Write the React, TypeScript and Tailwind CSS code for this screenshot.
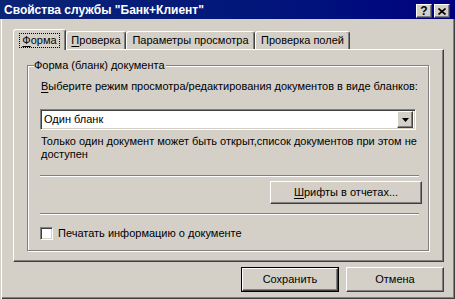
import React from "react";

// Win2000-style "Свойства службы" dialog
const face = "bg-[#d4d0c8]";
const raised =
  "border border-t-white border-l-white border-r-[#404040] border-b-[#404040] shadow-[inset_-1px_-1px_0_#808080]";
const sunken =
  "border border-t-[#808080] border-l-[#808080] border-r-white border-b-white shadow-[inset_1px_1px_0_#404040,inset_-1px_-1px_0_#d4d0c8]";

function Tab({ label, acc, selected, width }: { label: string; acc?: string; selected?: boolean; width: string }) {
  return (
    <div
      className={`${width} ${face} flex items-center justify-center rounded-t-[3px] border-l border-t border-r border-l-white border-t-white border-r-[#404040] shadow-[inset_-1px_0_0_#808080] ${
        selected ? "relative z-10 -mb-px h-[21px]" : "h-[18px]"
      }`}
    >
      <span className={selected ? "outline outline-1 outline-dotted outline-black px-[2px] leading-[13px]" : "leading-[13px]"}>
        {acc && <u className="underline-offset-[2px]">{acc}</u>}
        {label}
      </span>
    </div>
  );
}

function Separator() {
  return <div className="h-[2px] w-[379px] border-t border-t-[#808080] border-b border-b-white" />;
}

export default function App() {
  return (
    <div
      className={`w-[455px] h-[299px] ${face} text-[11px] text-black font-['Liberation_Sans',Arial,sans-serif] shadow-[inset_1px_0_0_#d4d0c8,inset_2px_0_0_#fff,inset_-1px_-1px_0_#404040,inset_-2px_-2px_0_#808080] flex flex-col overflow-hidden`}
    >
      {/* title bar */}
      <div className="h-[19px] shrink-0 bg-gradient-to-r from-[#0c2474] to-[#000080] flex items-center pl-[4px] pr-[5px]">
        <span className="flex-1 text-white font-bold text-[12px] leading-[14px]">
          Свойства службы "Банк+Клиент"
        </span>
        <div className="flex gap-[2px] mt-[3px]">
          <div className={`${face} ${raised} w-[16px] h-[14px] flex items-center justify-center font-bold text-[12px] leading-none`}>?</div>
          <div className={`${face} ${raised} w-[16px] h-[14px] flex items-center justify-center`}>
            <svg width="8" height="7" viewBox="0 0 8 7">
              <path d="M0.5 0.5 L7.5 6.5 M7.5 0.5 L0.5 6.5" stroke="#000" strokeWidth="1.6" />
            </svg>
          </div>
        </div>
      </div>

      {/* tabs + panel */}
      <div className="ml-[13px] mt-[10px] w-[431px]">
        <div className="flex items-end h-[20px]">
          <Tab label="орма" acc="Ф" selected width="w-[53px]" />
          <Tab label="роверка" acc="П" width="w-[60px]" />
          <Tab label="Параметры просмотра" width="w-[129px]" />
          <Tab label="Проверка полей" width="w-[95px]" />
        </div>
        <div className={`h-[213px] ${raised} pl-[13px] pt-[15px]`}>
          <div className="relative w-[402px] h-[186px] border border-[#808080] shadow-[inset_1px_1px_0_#fff,1px_1px_0_#fff] pl-[12px]">
            <span className={`absolute left-[6px] -top-[7px] ${face} pr-[1px] leading-[13px]`}>Форма (бланк) документа</span>
            <div className="mt-[14px] pl-[1px] leading-[13px]">
              <u className="underline-offset-[2px]">В</u>ыберите режим просмотра/редактирования документов в виде бланков:
            </div>
            <div className={`mt-[16px] w-[376px] h-[21px] bg-white ${sunken} flex items-center`}>
              <span className="flex-1 pl-[3px] leading-[13px]">Один бланк</span>
              <div className={`${face} ${raised} w-[16px] h-[17px] flex items-center justify-center mr-[2px]`}>
                <svg width="7" height="4" viewBox="0 0 7 4">
                  <path d="M0 0 H7 L3.5 4 Z" fill="#000" />
                </svg>
              </div>
            </div>
            <div className="mt-[5px] pl-[1px] leading-[13px] w-[385px]">
              Только один документ может быть открыт,список документов при этом не доступен
            </div>
            <div className="mt-[14px]">
              <Separator />
            </div>
            <div className="flex w-[382px] justify-end mt-[4px]">
              <div className={`${raised} w-[152px] h-[23px] flex items-center justify-center`}>
                <span>
                  <u className="underline-offset-[2px]">Ш</u>рифты в отчетах...
                </span>
              </div>
            </div>
            <div className="mt-[9px]">
              <Separator />
            </div>
            <div className="mt-[12px] flex items-center gap-[5px]">
              <div className={`w-[13px] h-[13px] bg-white ${sunken}`} />
              <span className="leading-[13px]">Печатать информацию о документе</span>
            </div>
          </div>
        </div>
      </div>

      {/* dialog buttons */}
      <div className="flex gap-[7px] ml-[241px] mt-[5px]">
        <div className="w-[98px] h-[25px] border border-black">
          <div className={`${raised} w-full h-full flex items-center justify-center`}>Сохранить</div>
        </div>
        <div className={`${raised} w-[98px] h-[25px] flex items-center justify-center`}>Отмена</div>
      </div>
    </div>
  );
}
